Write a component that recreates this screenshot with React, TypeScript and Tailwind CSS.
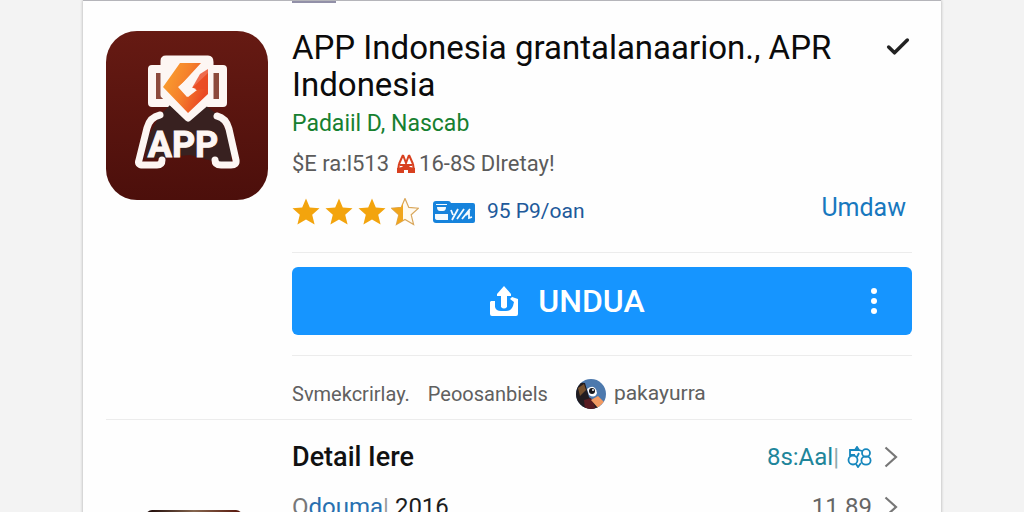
import React from 'react';
import { Check } from 'lucide-react';

const STAR =
  'M14 0.5 L17.8 9.4 L27.5 10.2 L20.2 16.8 L22.6 26.6 L14 21.4 L5.4 26.6 L7.8 16.8 L0.5 10.2 L10.2 9.4 Z';

const AppIcon: React.FC = () => (
  <svg
    viewBox="0 0 162 169"
    className="h-[169px] w-[162px] shrink-0"
    role="img"
    aria-label="APP Indonesia"
  >
    <defs>
      <linearGradient id="tile" x1="0" y1="0" x2="0" y2="1">
        <stop offset="0" stopColor="#661a13" />
        <stop offset="1" stopColor="#4c0f0b" />
      </linearGradient>
      <linearGradient id="flame" x1="0" y1="0" x2="1" y2="0.4">
        <stop offset="0" stopColor="#fba52f" />
        <stop offset="0.55" stopColor="#f5812c" />
        <stop offset="1" stopColor="#ea4a24" />
      </linearGradient>
    </defs>
    <rect width="162" height="169" rx="31" fill="url(#tile)" />
    <g stroke="#fdf6f3" strokeWidth="8" strokeLinejoin="round">
      <rect x="46" y="38" width="18" height="34" fill="#8c4a3c" />
      <rect x="99" y="38" width="18" height="34" fill="#8c4a3c" />
    </g>
    <path d="M54 84 L64 74 L82 90 L99 74 L112 84 L125 110 L125 131 H110 L84 124 L40 128 L41 108 Z" fill="#382120" />
    <path
      d="M60 28 H102 Q104 28 104 31 V68 L82 87 L58 64 V30 Q58 28 60 28 Z"
      fill="#fdf6f3"
      stroke="#fdf6f3"
      strokeWidth="7"
      strokeLinejoin="round"
    />
    <path
      d="M74 32 H95 L73 56 L82 66 L91 59 L86 57 L102 42 V63 L82 82 L57 56 Z"
      fill="url(#flame)"
    />
    <path d="M94 43 L102 38 V57 L91 59 L86 57 Z" fill="#ea4a24" opacity="0.8" />
    <path d="M72 56 L92 39 L91 47 L82 55 L90 58 L81 66 Z" fill="#fdf6f3" />
    <path
      d="M54 84 Q44 86 41 97 L33 129 Q31 134 37 134 H51 Q56 134 56 129"
      fill="none"
      stroke="#fdf6f3"
      strokeWidth="7"
      strokeLinecap="round"
    />
    <path
      d="M111 85 Q120 87 123 98 L130 129 Q131 134 125 134 H115 Q109 134 109 129"
      fill="none"
      stroke="#fdf6f3"
      strokeWidth="7"
      strokeLinecap="round"
    />
    <text
      x="77"
      y="126"
      textAnchor="middle"
      fill="#fdf6f3"
      stroke="#fdf6f3"
      strokeWidth="1"
      className="text-[36px] font-bold"
    >
      APP
    </text>
  </svg>
);

const Star: React.FC<{ half?: boolean }> = ({ half }) => (
  <svg viewBox="0 0 28 28" className="h-7 w-7">
    {half ? (
      <>
        <path d={STAR} fill="#fffaf0" stroke="#d9a75c" strokeWidth="1.2" />
        <path
          d="M14 0.5 L12 5 V22.6 L5.4 26.6 L7.8 16.8 L0.5 10.2 L10.2 9.4 Z"
          fill="#f0a51c"
        />
      </>
    ) : (
      <path d={STAR} fill="#f3a40d" />
    )}
  </svg>
);

const AlertIcon: React.FC = () => (
  <svg viewBox="0 0 18 20" className="h-5 w-[18px]">
    <path
      d="M6 1 L2 10 M6 1 L9 9 L12 1 M12 1 L16 10 M2 10 L1 17 M16 10 L17 17 M3 11 H15"
      fill="none"
      stroke="#d8401f"
      strokeWidth="2"
      strokeLinejoin="round"
    />
    <path d="M0 19 V14 L5 13 L9 9 L13 13 L18 14 V19 H11 V16 H7 V19 Z" fill="#d8401f" />
  </svg>
);

const CardIcon: React.FC = () => (
  <svg viewBox="0 0 42 22" className="h-[22px] w-[42px]">
    <rect x="0" y="0" width="18" height="22" rx="3" fill="#1683dc" />
    <rect x="10" y="2" width="32" height="20" rx="2" fill="#1683dc" />
    <path d="M3 3 H14 V4 H3 Z M4 6 H13 Q13 10 10 10 H7 Q4 10 4 6 Z M2 13 H15 V19 H5 Q2 19 2 17 Z" fill="#f4fbff" />
    <path
      d="M18 9 L20 14 M25 8 L19 19 M31 8 L24 18 M37 8 L29 18 M33 14 L36 11 L36 17 L39 16"
      fill="none"
      stroke="#f4fbff"
      strokeWidth="1.8"
    />
  </svg>
);

const UploadIcon: React.FC = () => (
  <svg viewBox="0 0 28 30" className="h-[30px] w-7" fill="#ffffff">
    <path d="M14 0 L21 8 V10 H17 V21 Q14 24 11 21 V10 H7 V8 Z" />
    <path d="M1 15 H5 V21 Q6 25 11 25 H16 Q21 25 23 20 L24 16 L20 13 L22 11 L28 13 V28 Q28 30 26 30 H2 Q0 30 0 28 V16 Z" />
  </svg>
);

const Avatar: React.FC = () => (
  <svg viewBox="0 0 30 30" className="h-[30px] w-[30px]">
    <defs>
      <clipPath id="round">
        <circle cx="15" cy="15" r="15" />
      </clipPath>
    </defs>
    <g clipPath="url(#round)">
      <rect width="30" height="30" fill="#4d79ad" />
      <path d="M0 3 L9 4 L13 18 L24 30 H0 Z" fill="#211c20" />
      <path d="M2 9 L8 5 L10 11 L4 17 Z" fill="#75502e" />
      <path d="M8 21 L15 19 L20 30 H9 Z" fill="#581b21" />
      <path d="M11 10 Q19 4 21 14 Q19 20 13 16 Z" fill="#ffffff" />
      <circle cx="16" cy="12" r="3" fill="#15161c" />
      <circle cx="17" cy="11" r="1" fill="#ffffff" />
      <path d="M15 21 L22 17 L28 23 L22 29 Z" fill="#f29a62" />
    </g>
  </svg>
);

const GearIcon: React.FC = () => (
  <svg viewBox="0 0 25 22" className="h-[22px] w-[25px]" fill="none" stroke="#1687bd" strokeWidth="1.8">
    <path d="M12 4 H3 V9 H8" />
    <ellipse cx="6" cy="14" rx="4.5" ry="4.5" />
    <path d="M8 4 L10 1 L12 4 L15 5 M9 18 L11 21 L14 17 M12 7 L10 11" />
    <ellipse cx="19" cy="7" rx="4" ry="3.8" />
    <ellipse cx="19" cy="14.5" rx="4.6" ry="4.2" />
  </svg>
);

const Chevron: React.FC = () => (
  <svg viewBox="0 0 14 22" className="h-[22px] w-3.5" fill="none" stroke="#777777" strokeWidth="2.2">
    <path d="M1.5 1.5 L12 11 L1.5 20.5" />
  </svg>
);

const MoreDots: React.FC = () => (
  <svg viewBox="0 0 6 26" className="h-[26px] w-1.5" fill="#ffffff">
    <circle cx="3" cy="3" r="3" />
    <circle cx="3" cy="13" r="3" />
    <circle cx="3" cy="23" r="3" />
  </svg>
);

const App: React.FC = () => {
  return (
    <div className="h-screen overflow-hidden bg-[#f3f3f3] px-[83px] font-['Roboto','Liberation_Sans',sans-serif]">
      <main className="min-h-full border-t border-[#b5b5ba] bg-[#fefefe] pr-[29px] pl-[23px] shadow-[0_0_3px_rgba(0,0,0,0.3)]">
        <div className="ml-[186px] h-[2px] w-11 bg-[#9290a8]"></div>

        <section className="flex gap-6 border-b border-[#ececec] pt-[26px]">
          <div className="pt-0.5">
            <AppIcon />
          </div>

          <div className="min-w-0 flex-1">
            <header className="flex items-start justify-between">
              <h1 className="text-[33px] leading-[37px] text-[#0b0b0b]">
                APP Indonesia grantalanaarion., APR
                <br />
                Indonesia
              </h1>
              <button aria-label="Selesai" className="pt-1">
                <Check className="h-7 w-7 text-[#222222]" strokeWidth={3} />
              </button>
            </header>

            <a href="#developer" className="block text-[23px] leading-[42px] text-[#168030]">
              Padaiil D, Nascab
            </a>
            <p className="flex items-center text-[22px] leading-[38px] text-[#5b5b5b]">
              <span className="mr-2">$E ra:l513</span>
              <AlertIcon />
              <span className="ml-1">16-8S Dlretay!</span>
            </p>

            <div className="flex h-[70px] items-center border-b border-[#ececec] pb-3">
              <div className="flex gap-[5px]" role="img" aria-label="3.5">
                <Star />
                <Star />
                <Star />
                <Star half />
              </div>
              <div className="ml-3.5 flex items-center gap-3">
                <CardIcon />
                <span className="text-[21px] text-[#20599a]">95 P9/oan</span>
              </div>
              <a href="#umdaw" className="mr-1.5 ml-auto pb-2 text-[25px] text-[#1878be]">
                Umdaw
              </a>
            </div>

            <div className="mt-3.5 flex h-[68px] items-center rounded-md bg-[#1695ff] text-white">
              <button className="flex h-full flex-1 items-center justify-center gap-5 text-[32px] font-medium">
                <UploadIcon />
                UNDUA
              </button>
              <button aria-label="Lainnya" className="h-full pr-[35px] pl-7">
                <MoreDots />
              </button>
            </div>

            <div className="mt-5 flex h-16 items-center border-t border-[#ececec] pt-3 text-xl text-[#606060]">
              <span>Svmekcrirlay.</span>
              <span className="ml-[18px]">Peoosanbiels</span>
              <a href="#author" className="ml-7 flex items-center gap-2 text-[21px]">
                <Avatar />
                pakayurra
              </a>
            </div>
          </div>
        </section>

        <section className="flex gap-6 pt-3">
          <div className="w-[162px] shrink-0 pt-[78px] pl-10">
            <div className="h-24 w-24 rounded-md bg-linear-to-r from-[#1c0807] via-[#85664f] to-[#551109]"></div>
          </div>

          <div className="flex-1">
            <div className="flex h-[50px] items-center justify-between">
              <h2 className="text-[27px] font-medium text-[#111111]">Detail Iere</h2>
              <a href="#detail" className="mr-3.5 flex items-center text-2xl text-[#20859a]">
                8s:Aal
                <span className="text-[#8fa9ad]">|</span>
                <span className="mr-3 ml-2">
                  <GearIcon />
                </span>
                <Chevron />
              </a>
            </div>
            <div className="flex h-[50px] items-center justify-between text-2xl">
              <p className="text-[#1d1d1d]">
                <span className="text-[#777777]">O</span>
                <span className="text-[#2870b0]">douma</span>
                <span className="text-[#999999]">|</span> 2016
              </p>
              <a href="#version" className="mr-3.5 flex items-center gap-3 text-[#666666]">
                11.89
                <Chevron />
              </a>
            </div>
          </div>
        </section>
      </main>
    </div>
  );
};

export default App;
